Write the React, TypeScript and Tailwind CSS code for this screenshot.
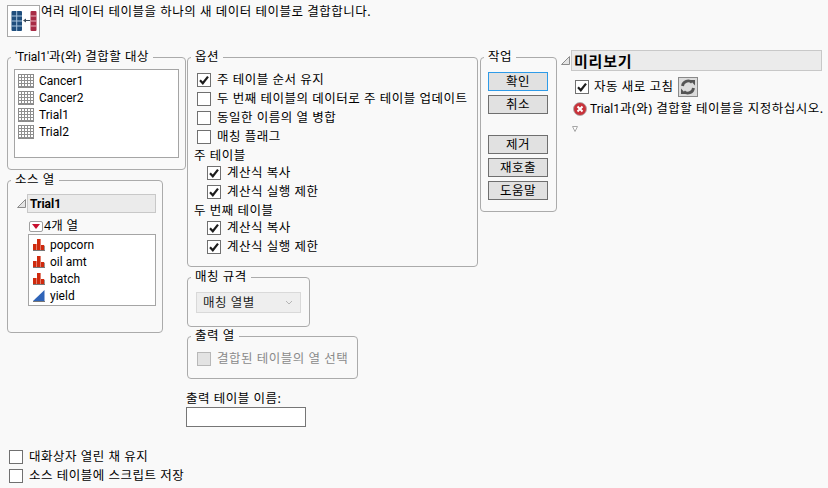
import React from "react";

const font = "[font-family:'Noto_Sans','Noto_Sans_CJK_KR',sans-serif]";
const latin = "[font-family:Roboto,sans-serif] text-[12px] tracking-normal";

function Check({ checked, disabled }: { checked?: boolean; disabled?: boolean }) {
  return (
    <span
      className={`flex h-[14px] w-[14px] shrink-0 items-center justify-center border ${
        disabled ? "border-[#b8b8b8] bg-[#e3e3e3]" : "border-[#707070] bg-white"
      }`}
    >
      {checked && (
        <svg width="12" height="12" viewBox="0 0 12 12">
          <path d="M2 6.2 L4.8 9.2 L10 2.6" fill="none" stroke="#1c1c1c" strokeWidth="2.2" />
        </svg>
      )}
    </span>
  );
}

function CheckRow({ label, checked, disabled, className = "" }: { label: string; checked?: boolean; disabled?: boolean; className?: string }) {
  return (
    <div className={`flex h-[19px] items-center gap-[6px] whitespace-nowrap ${disabled ? "text-[#8a8a8a]" : ""} ${className}`}>
      <Check checked={checked} disabled={disabled} />
      <span>{label}</span>
    </div>
  );
}

function Group({ title, className = "", bodyClassName = "", children }: { title: React.ReactNode; className?: string; bodyClassName?: string; children: React.ReactNode }) {
  return (
    <fieldset className={`rounded-[4px] border border-[#ababab] ${className}`}>
      <legend className="ml-[3px] h-[16px] px-[4px] leading-[15px] whitespace-nowrap">{title}</legend>
      <div className={bodyClassName}>{children}</div>
    </fieldset>
  );
}

function TableIcon() {
  return (
    <svg width="16" height="14" viewBox="0 0 16 14" className="shrink-0">
      <rect x="0.5" y="0.5" width="15" height="13" fill="#fff" stroke="#8a8a8a" />
      <path d="M3.5 0V14M6.5 0V14M9.5 0V14M12.5 0V14M0 3.5H16M0 6.5H16M0 9.5H16M0 12.5H16" stroke="#8f8f8f" />
    </svg>
  );
}

function BarsIcon() {
  return (
    <svg width="12" height="12" viewBox="0 0 12 12" className="shrink-0">
      <rect x="0" y="5" width="3.6" height="6" fill="#cf2a0e" />
      <rect x="4" y="0" width="3.6" height="11" fill="#cf2a0e" />
      <rect x="8" y="6" width="3.2" height="5" fill="#cf2a0e" />
      <rect x="0" y="11" width="12" height="1" fill="#777" />
      <rect x="11.2" y="7" width="0.8" height="4" fill="#888" />
    </svg>
  );
}

function WedgeIcon() {
  return (
    <svg width="12" height="12" viewBox="0 0 12 12" className="shrink-0">
      <path d="M0 11 L11.5 0 V11 Z" fill="#2f64b8" />
      <rect x="0" y="11" width="12" height="1" fill="#777" />
    </svg>
  );
}

function Disclosure() {
  return (
    <svg width="9" height="9" viewBox="0 0 9 9" className="shrink-0">
      <path d="M0.5 8.5 H8.5 V0.5 Z" fill="#e4e4e4" stroke="#8c8c8c" />
    </svg>
  );
}

function ListRow({ icon, label }: { icon: React.ReactNode; label: string }) {
  return (
    <div className="flex h-[17px] items-center gap-[5px]">
      {icon}
      <span className={latin}>{label}</span>
    </div>
  );
}

function ActionButton({ label, focus }: { label: string; focus?: boolean }) {
  return (
    <div
      className={`flex h-[19px] items-center justify-center border bg-[#e1e1e1] ${
        focus ? "border-[#2e9be8]" : "border-[#6f6f6f]"
      }`}
    >
      {label}
    </div>
  );
}

export default function App() {
  return (
    <div className={`flex h-[488px] w-[828px] flex-col overflow-hidden bg-[#f9f9f9] text-[12.5px] leading-[16px] tracking-[0.5px] text-black ${font}`}>
      <header className="flex h-[49px] items-start pl-[7px] pt-[5px]">
        <div className="flex h-[32px] w-[33px] items-center justify-center border border-[#a8a8a8] bg-white">
          <svg width="26" height="20" viewBox="0 0 26 20">
            <rect x="0.5" y="0" width="10.5" height="20" rx="1" fill="#1f4e7d" />
            <path d="M0.5 5H11M0.5 10H11M0.5 15H11M5.7 0V20" stroke="#a9c4de" strokeWidth="1" />
            <rect x="19.5" y="0" width="6" height="20" rx="1" fill="#a82c46" />
            <path d="M19.5 5H25.5M19.5 10H25.5M19.5 15H25.5" stroke="#e6b0bb" strokeWidth="1" />
            <path d="M19 9.5H14" stroke="#3a4a5a" strokeWidth="1" />
            <path d="M15 7.5 L12 9.5 L15 11.5 Z" fill="#3a4a5a" />
          </svg>
        </div>
        <span className="ml-[1px] mt-[-1px]">여러 데이터 테이블을 하나의 새 데이터 테이블로 결합합니다.</span>
      </header>

      <main className="flex flex-1 items-start pl-[7px]">
        <div className="flex w-[180px] flex-col gap-[2px]">
          <Group
            title={<><span className={latin}>'Trial1'</span>과(와) 결합할 대상</>}
            className="h-[121px] w-[179px]"
            bodyClassName="px-[6px] pt-[4px]"
          >
            <div className="h-[89px] w-[165px] border border-[#a5a5a5] bg-white px-[3px] pt-[2px]">
              {["Cancer1", "Cancer2", "Trial1", "Trial2"].map((t) => (
                <ListRow key={t} icon={<TableIcon />} label={t} />
              ))}
            </div>
          </Group>
          <Group title="소스 열" className="h-[161px] w-[156px]" bodyClassName="pl-[9px] pr-[6px] pt-[6px]">
            <div className="flex items-center gap-[1px]">
              <Disclosure />
              <div className={`flex h-[19px] flex-1 items-center border border-[#c8c8c8] bg-[#ebebeb] pl-[2px] font-bold ${latin}`}>Trial1</div>
            </div>
            <div className="mt-[5px] flex h-[16px] items-center gap-[1px] pl-[12px] tracking-[0.2px]">
              <span className="flex h-[11px] w-[14px] items-center justify-center rounded-[2px] border border-[#a0a0a0] bg-white">
                <svg width="8" height="5" viewBox="0 0 8 5"><path d="M0 0H8L4 5Z" fill="#c8102e" /></svg>
              </span>
              <span>4개 열</span>
            </div>
            <div className="ml-[11px] h-[72px] w-[128px] border border-[#a5a5a5] bg-white px-[4px] pt-[1px]">
              <ListRow icon={<BarsIcon />} label="popcorn" />
              <ListRow icon={<BarsIcon />} label="oil amt" />
              <ListRow icon={<BarsIcon />} label="batch" />
              <ListRow icon={<WedgeIcon />} label="yield" />
            </div>
          </Group>
        </div>

        <div className="flex w-[293px] flex-col">
          <Group title="옵션" className="h-[218px] w-[290px]" bodyClassName="px-[9px] pt-[5px]">
            <CheckRow checked label="주 테이블 순서 유지" />
            <CheckRow label="두 번째 테이블의 데이터로 주 테이블 업데이트" />
            <CheckRow label="동일한 이름의 열 병합" />
            <CheckRow label="매칭 플래그" />
            <div className="-ml-[3px] h-[17px] whitespace-nowrap pt-[2px]">주 테이블</div>
            <CheckRow checked className="pl-[10px]" label="계산식 복사" />
            <CheckRow checked className="pl-[10px]" label="계산식 실행 제한" />
            <div className="-ml-[3px] h-[17px] whitespace-nowrap pt-[2px]">두 번째 테이블</div>
            <CheckRow checked className="pl-[10px]" label="계산식 복사" />
            <CheckRow checked className="pl-[10px]" label="계산식 실행 제한" />
          </Group>
          <Group title="매칭 규격" className="mt-[2px] h-[58px] w-[123px]" bodyClassName="px-[8px] pt-[7px]">
            <div className="flex h-[21px] w-[105px] items-center justify-between border border-[#d9d9d9] bg-[#eeeeee] pl-[6px] pr-[7px]">
              <span className="text-[#222]">매칭 열별</span>
              <svg width="8" height="5" viewBox="0 0 8 5"><path d="M1 1L4 4L7 1" fill="none" stroke="#b5b5b5" /></svg>
            </div>
          </Group>
          <Group title="출력 열" className="mt-[1px] h-[51px] w-[170px]" bodyClassName="px-[9px] pt-[5px]">
            <CheckRow disabled label="결합된 테이블의 열 선택" />
          </Group>
          <label className="-ml-[1px] mt-[12px] block h-[16px] whitespace-nowrap">출력 테이블 이름:</label>
          <div className="-ml-[1px] h-[20px] w-[120px] border border-[#767676] bg-white" />
        </div>

        <Group title="작업" className="h-[163px] w-[77px]" bodyClassName="pl-[7px] pt-[7px]">
          <div className="flex w-[60px] flex-col gap-[4px]">
            <ActionButton focus label="확인" />
            <ActionButton label="취소" />
            <div className="h-[13px]" />
            <ActionButton label="제거" />
            <ActionButton label="재호출" />
            <ActionButton label="도움말" />
          </div>
        </Group>

        <section className="ml-[4px] w-[261px] pt-[1px]">
          <div className="flex items-center gap-[1px]">
            <Disclosure />
            <div className="flex h-[21px] flex-1 items-center border border-[#c8c8c8] bg-[#ebebeb] pl-[2px] text-[15px] font-bold tracking-[0.8px]">미리보기</div>
          </div>
          <div className="ml-[14px] mt-[6px] flex h-[20px] items-center gap-[4px]">
            <Check checked />
            <span className="ml-[1px]">자동 새로 고침</span>
            <span className="flex h-[20px] w-[20px] items-center justify-center border border-[#8a8a8a] bg-[#dcdcdc]">
              <svg width="16" height="16" viewBox="0 0 16 16">
                <path d="M2.5 7 A5.6 5.6 0 0 1 12 3.6" fill="none" stroke="#555" strokeWidth="2.8" />
                <path d="M10 1 L15 1 L15 6.5 Z" fill="#555" />
                <path d="M13.5 9 A5.6 5.6 0 0 1 4 12.4" fill="none" stroke="#555" strokeWidth="2.8" />
                <path d="M6 15 L1 15 L1 9.5 Z" fill="#555" />
              </svg>
            </span>
          </div>
          <div className="ml-[12px] mt-[2px] flex h-[19px] items-center gap-[3px] whitespace-nowrap">
            <svg width="14" height="14" viewBox="0 0 14 14" className="shrink-0">
              <circle cx="7" cy="7" r="6.5" fill="#c8323a" stroke="#a8a8a8" strokeWidth="0.8" />
              <path d="M4.5 4.5L9.5 9.5M9.5 4.5L4.5 9.5" stroke="#fff" strokeWidth="2" />
            </svg>
            <span><span className={latin}>Trial1</span>과(와) 결합할 테이블을 지정하십시오.</span>
          </div>
          <div className="ml-[11px] mt-[8px] flex h-[6px]">
            <svg width="6" height="6" viewBox="0 0 6 6"><path d="M0.5 0.5H5.5L3 5.5Z" fill="#fff" stroke="#a8a8a8" /></svg>
          </div>
        </section>
      </main>

      <footer className="pb-[3px] pl-[9px]">
        <CheckRow label="대화상자 열린 채 유지" />
        <CheckRow label="소스 테이블에 스크립트 저장" />
      </footer>
    </div>
  );
}
